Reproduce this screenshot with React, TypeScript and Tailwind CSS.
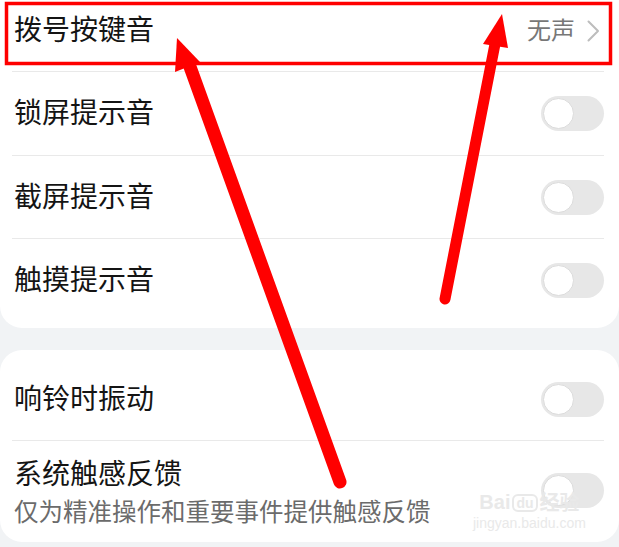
import React from "react";

const font = { fontFamily: '"Noto Sans CJK SC", "Noto Sans", sans-serif' };

function Toggle() {
  return (
    <div className="w-[63px] h-[35px] rounded-full bg-[#e7e7e7] flex items-center px-[2px] shrink-0">
      <div className="w-[31px] h-[31px] rounded-full bg-white border border-[#dcdcdc]" />
    </div>
  );
}

function Divider() {
  return <div className="h-px bg-[#e9e9e9] ml-[12px] mr-[15px]" />;
}

function ToggleRow({ label, h = "h-[83px]" }: { label: string; h?: string }) {
  return (
    <div className={`${h} flex items-center justify-between pl-[14px] pr-[15px]`}>
      <span className="text-[28px] leading-none text-[#141414] mb-[5px]">{label}</span>
      <Toggle />
    </div>
  );
}

export default function App() {
  return (
    <div className="relative w-[619px] h-[547px] overflow-hidden bg-[#f1f3f5]" style={font}>
      <div className="bg-white rounded-b-[22px] pb-[6px]">
        <div className="h-[71px] pb-[10px] flex items-center justify-between pl-[14px] pr-[19px]">
          <span className="text-[28px] leading-none text-[#141414] mb-[5px]">拨号按键音</span>
          <div className="flex items-center gap-[12px]">
            <span className="text-[24px] leading-none text-[#777777] mb-[3px]">无声</span>
            <svg width="13" height="22" viewBox="0 0 13 22" fill="none">
              <path d="M1.5 1.5 L11 11 L1.5 20.5" stroke="#bdbdbd" strokeWidth="2" strokeLinecap="round" strokeLinejoin="round" />
            </svg>
          </div>
        </div>
        <Divider />
        <ToggleRow label="锁屏提示音" />
        <Divider />
        <ToggleRow label="截屏提示音" h="h-[82px]" />
        <Divider />
        <ToggleRow label="触摸提示音" />
      </div>

      <div className="mt-[22px] bg-white rounded-[22px] pt-[8px] pb-[15px]">
        <ToggleRow label="响铃时振动" h="h-[82px]" />
        <Divider />
        <div className="flex items-center justify-between pl-[14px] pr-[15px] pt-[13px]">
          <div className="flex flex-col">
            <span className="text-[28px] leading-[36px] text-[#141414]">系统触感反馈</span>
            <span className="mt-[5px] text-[24.5px] leading-[32px] text-[#6b6b6b]">仅为精准操作和重要事件提供触感反馈</span>
          </div>
          <Toggle />
        </div>
      </div>

      {/* watermark */}
      <div className="absolute left-[473px] top-[492px] flex flex-col items-center pointer-events-none">
        <div className="flex items-end text-[20px] leading-none font-bold text-[#e9e9e9]" style={{ fontFamily: '"Liberation Sans", "Noto Sans CJK SC", sans-serif' }}>
          <span>Bai</span>
          <span className="ml-[2px] px-[2px] rounded-[6px] border-2 border-[#e9e9e9] text-[14px]">du</span>
          <span className="ml-[2px]" style={font}>经验</span>
        </div>
        <span className="mt-[4px] text-[14px] leading-none text-[#e9e9e9]" style={{ fontFamily: '"Liberation Sans", sans-serif' }}>jingyan.baidu.com</span>
      </div>

      {/* annotations */}
      <svg className="absolute inset-0 pointer-events-none" width="619" height="547" viewBox="0 0 619 547">
        <rect x="6.5" y="3.5" width="604" height="60" fill="none" stroke="#ff0000" strokeWidth="3.5" />
        <line x1="340" y1="482" x2="189" y2="64" stroke="#ff0000" strokeWidth="13" strokeLinecap="round" />
        <polygon points="177,38 175,72 200,62" fill="#ff0000" />
        <line x1="445" y1="299" x2="495" y2="44" stroke="#ff0000" strokeWidth="11" strokeLinecap="round" />
        <polygon points="502,14 483,44 508,48" fill="#ff0000" />
      </svg>
    </div>
  );
}
